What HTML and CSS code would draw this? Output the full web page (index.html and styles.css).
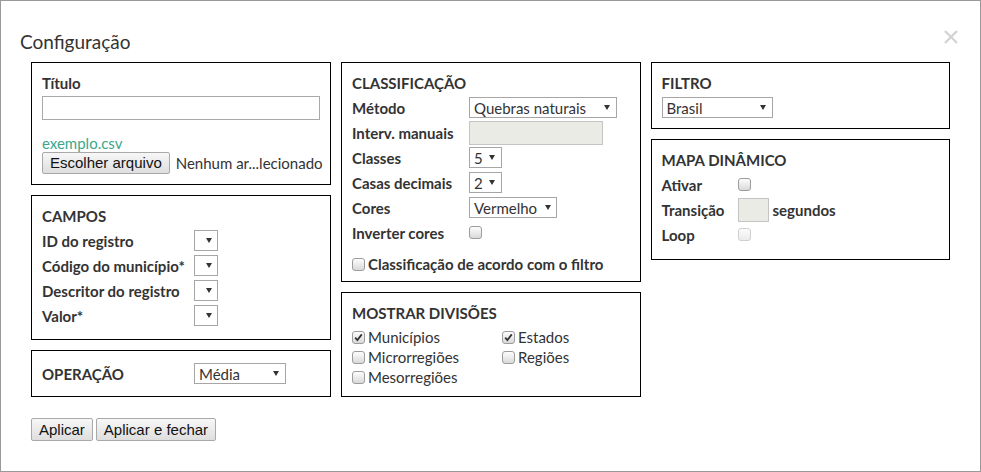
FILE: index.html
```html
<!DOCTYPE html>
<html lang="pt">
<head>
<meta charset="utf-8">
<title>Configuração</title>
<link rel="stylesheet" href="styles.css">
</head>
<body>
<div class="modal">
  <div class="modal-header">
    <h4 class="modal-title">Configuração</h4>
    <svg class="close" width="14" height="14" viewBox="0 0 14 14" aria-label="Fechar">
      <path d="M1 1 L13 13 M13 1 L1 13" stroke="#d2d2d2" stroke-width="2.2" fill="none"/>
    </svg>
  </div>
  <div class="modal-body">
    <div class="columns">
      <div class="col">
        <div class="box">
          <div class="heading">Título</div>
          <div class="text-input"></div>
          <a class="file-link">exemplo.csv</a>
          <div class="file-row"><span class="btn btn-file">Escolher arquivo</span><span class="file-name">Nenhum ar...lecionado</span></div>
        </div>
        <div class="box box-campos">
          <div class="heading">CAMPOS</div>
          <div class="rows">
            <div class="row"><span class="lbl lbl-campos">ID do registro</span><span class="select sel-xs"><span></span><svg class="arrow" width="6" height="5" viewBox="0 0 6 5"><polygon points="0,0 6,0 3,5"/></svg></span></div>
            <div class="row"><span class="lbl lbl-campos">Código do município*</span><span class="select sel-xs"><span></span><svg class="arrow" width="6" height="5" viewBox="0 0 6 5"><polygon points="0,0 6,0 3,5"/></svg></span></div>
            <div class="row"><span class="lbl lbl-campos">Descritor do registro</span><span class="select sel-xs"><span></span><svg class="arrow" width="6" height="5" viewBox="0 0 6 5"><polygon points="0,0 6,0 3,5"/></svg></span></div>
            <div class="row"><span class="lbl lbl-campos">Valor*</span><span class="select sel-xs"><span></span><svg class="arrow" width="6" height="5" viewBox="0 0 6 5"><polygon points="0,0 6,0 3,5"/></svg></span></div>
          </div>
        </div>
        <div class="box">
          <div class="row"><span class="lbl lbl-campos">OPERAÇÃO</span><span class="select sel-op"><span>Média</span><svg class="arrow" width="6" height="5" viewBox="0 0 6 5"><polygon points="0,0 6,0 3,5"/></svg></span></div>
        </div>
      </div>

      <div class="col">
        <div class="box box-class">
          <div class="heading">CLASSIFICAÇÃO</div>
          <div class="rows">
            <div class="row"><span class="lbl lbl-class">Método</span><span class="select sel-metodo"><span>Quebras naturais</span><svg class="arrow" width="6" height="5" viewBox="0 0 6 5"><polygon points="0,0 6,0 3,5"/></svg></span></div>
            <div class="row"><span class="lbl lbl-class">Interv. manuais</span><span class="input-disabled"></span></div>
            <div class="row"><span class="lbl lbl-class">Classes</span><span class="select sel-num"><span>5</span><svg class="arrow" width="6" height="5" viewBox="0 0 6 5"><polygon points="0,0 6,0 3,5"/></svg></span></div>
            <div class="row"><span class="lbl lbl-class">Casas decimais</span><span class="select sel-num"><span>2</span><svg class="arrow" width="6" height="5" viewBox="0 0 6 5"><polygon points="0,0 6,0 3,5"/></svg></span></div>
            <div class="row"><span class="lbl lbl-class">Cores</span><span class="select sel-cores"><span>Vermelho</span><svg class="arrow" width="6" height="5" viewBox="0 0 6 5"><polygon points="0,0 6,0 3,5"/></svg></span></div>
            <div class="row"><span class="lbl lbl-class">Inverter cores</span><span class="cb"></span></div>
          </div>
          <div class="check-line bold"><span class="cb"></span>Classificação de acordo com o filtro</div>
        </div>
        <div class="box box-div">
          <div class="heading">MOSTRAR DIVISÕES</div>
          <div class="div-grid">
            <div class="check-line"><span class="cb checked"><svg width="11" height="11" viewBox="0 0 11 11"><path d="M2.2 5.6 L4.4 8 L8.8 2.4" stroke="#333" stroke-width="1.8" fill="none"/></svg></span>Municípios</div>
            <div class="check-line"><span class="cb checked"><svg width="11" height="11" viewBox="0 0 11 11"><path d="M2.2 5.6 L4.4 8 L8.8 2.4" stroke="#333" stroke-width="1.8" fill="none"/></svg></span>Estados</div>
            <div class="check-line"><span class="cb"></span>Microrregiões</div>
            <div class="check-line"><span class="cb"></span>Regiões</div>
            <div class="check-line"><span class="cb"></span>Mesorregiões</div>
          </div>
        </div>
      </div>

      <div class="col">
        <div class="box box-filtro">
          <div class="heading">FILTRO</div>
          <span class="select sel-filtro"><span>Brasil</span><svg class="arrow" width="6" height="5" viewBox="0 0 6 5"><polygon points="0,0 6,0 3,5"/></svg></span>
        </div>
        <div class="box box-mapa">
          <div class="heading">MAPA DINÂMICO</div>
          <div class="rows">
            <div class="row"><span class="lbl lbl-mapa">Ativar</span><span class="cb"></span></div>
            <div class="row"><span class="lbl lbl-mapa">Transição</span><span class="input-sec"></span><span class="bold suffix">segundos</span></div>
            <div class="row"><span class="lbl lbl-mapa">Loop</span><span class="cb disabled"></span></div>
          </div>
        </div>
      </div>
    </div>
    <div class="actions">
      <button class="btn btn-action">Aplicar</button>
      <button class="btn btn-action">Aplicar e fechar</button>
    </div>
  </div>
</div>
</body>
</html>
```

FILE: styles.css
```css
* { box-sizing: border-box; }

body {
  margin: 0;
  font-family: Lato, "Noto Sans", sans-serif;
  font-size: 15px;
  line-height: 20px;
  color: #333;
  background: #fff;
}

.modal {
  width: 981px;
  height: 472px;
  border: 1px solid #999;
  background: #fff;
}

.modal-header {
  height: 61px;
  padding: 31px 22px 0 19px;
  display: flex;
  justify-content: space-between;
  align-items: flex-start;
}

.modal-title {
  margin: 0;
  font-size: 19px;
  font-weight: 400;
  line-height: 20px;
}

.close { margin-top: -2px; display: block; }

.modal-body { padding: 0 30px; }

.columns {
  display: flex;
  gap: 10px;
  align-items: flex-start;
}

.col {
  width: 300px;
  display: flex;
  flex-direction: column;
  gap: 10px;
}

.box {
  border: 1px solid #000;
  padding: 10px;
}

.box-campos { padding-bottom: 11px; }
.box-class { padding-bottom: 7px; }
.box-div { padding-bottom: 9px; }
.box-mapa { padding-bottom: 12px; }

.heading {
  font-weight: 700;
  line-height: 20px;
}

.bold { font-weight: 700; }

.text-input {
  width: 278px;
  height: 24px;
  margin-top: 3px;
  border: 1px solid #a9a9a9;
  background: #fff;
}

.file-link {
  display: block;
  margin-top: 14px;
  line-height: 18px;
  color: #3aa78c;
  text-decoration: none;
}

.file-row {
  display: flex;
  align-items: center;
  height: 22px;
  white-space: nowrap;
}

.btn {
  font-family: "Liberation Sans", Arial, sans-serif;
  font-size: 15px;
  color: #111;
  height: 22px;
  padding: 0 7px;
  border: 1px solid #a9a9a9;
  border-radius: 2px;
  background: linear-gradient(#f7f7f7, #dedede);
  display: inline-flex;
  align-items: center;
  margin: 0;
}

.file-name { margin-left: 6px; }

.rows { margin-top: 2px; }

.row {
  display: flex;
  align-items: center;
  height: 25px;
  white-space: nowrap;
}

.lbl { font-weight: 700; flex: none; }
.lbl-campos { width: 152px; }
.lbl-class { width: 117px; }
.lbl-mapa { width: 76px; }

.select {
  display: inline-flex;
  align-items: center;
  justify-content: space-between;
  height: 21px;
  padding: 0 6px 0 4px;
  border: 1px solid #a6a6a6;
  background: #fff;
  color: #333;
  white-space: nowrap;
  flex: none;
}

.arrow { display: block; flex: none; fill: #333; }

.sel-xs { width: 24px; padding-right: 5px; }
.sel-op { width: 92px; }
.sel-metodo { width: 148px; }
.sel-num { width: 33px; }
.sel-cores { width: 88px; padding-right: 5px; }
.sel-filtro { width: 111px; }

.box-filtro .select { margin-top: 4px; }

.input-disabled {
  width: 134px;
  height: 24px;
  border: 1px solid #c4c4c4;
  background: #ebebe6;
}

.input-sec {
  width: 31px;
  height: 24px;
  border: 1px solid #c4c4c4;
  background: #ebebe6;
}

.suffix { margin-left: 4px; }

.cb {
  width: 13px;
  height: 13px;
  flex: none;
  border: 1px solid #9c9c9c;
  border-radius: 3px;
  background: linear-gradient(#fdfdfd, #d9d9d9);
  display: inline-flex;
  align-items: center;
  justify-content: center;
}

.cb.disabled {
  border-color: #cfcfcf;
  background: linear-gradient(#fbfbfb, #ececec);
}

.check-line {
  display: flex;
  align-items: center;
  height: 20px;
  white-space: nowrap;
}

.check-line .cb { margin-right: 3px; }

.box-class .check-line { margin-top: 9px; }

.div-grid {
  margin-top: 4px;
  display: grid;
  grid-template-columns: 150px auto;
}

.actions {
  margin-top: 21px;
  display: flex;
  gap: 3px;
}

.btn-action {
  height: 23px;
  padding: 0 7px;
}
```
